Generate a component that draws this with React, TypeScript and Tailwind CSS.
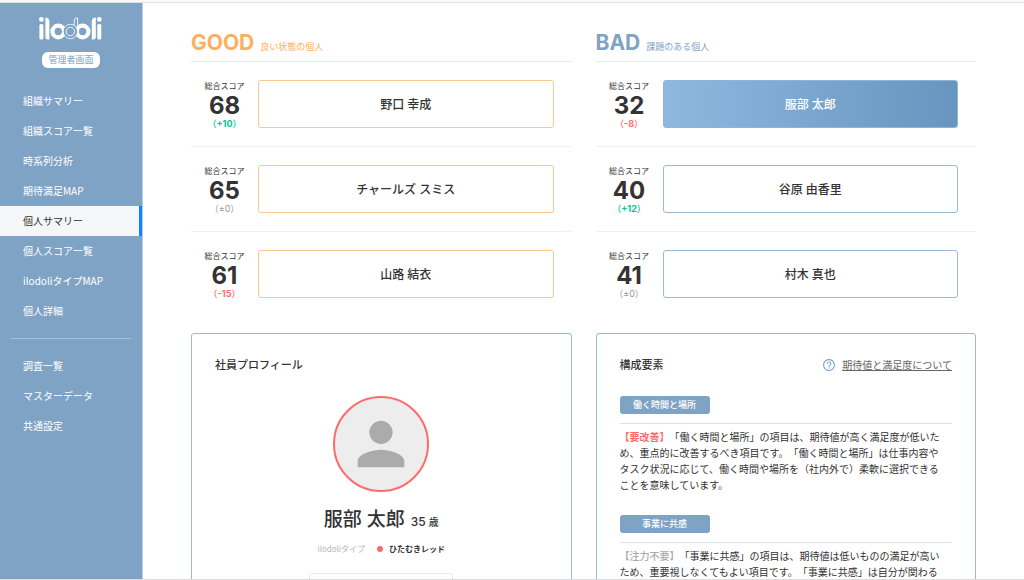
import React from 'react';

type Person = {
  name: string;
  score: number;
  diff: number;
  active?: boolean;
};

const mainMenu = [
  '組織サマリー',
  '組織スコア一覧',
  '時系列分析',
  '期待満足MAP',
  '個人サマリー',
  '個人スコア一覧',
  'ilodoliタイプMAP',
  '個人詳細',
];

const subMenu = ['調査一覧', 'マスターデータ', '共通設定'];

const goodList: Person[] = [
  { name: '野口 幸成', score: 68, diff: 10 },
  { name: 'チャールズ スミス', score: 65, diff: 0 },
  { name: '山路 結衣', score: 61, diff: -15 },
];

const badList: Person[] = [
  { name: '服部 太郎', score: 32, diff: -8, active: true },
  { name: '谷原 由香里', score: 40, diff: 12 },
  { name: '村木 真也', score: 41, diff: 0 },
];

const factors = [
  {
    title: '働く時間と場所',
    tag: '【要改善】',
    warn: true,
    text: '「働く時間と場所」の項目は、期待値が高く満足度が低いため、重点的に改善するべき項目です。「働く時間と場所」は仕事内容やタスク状況に応じて、働く時間や場所を（社内外で）柔軟に選択できることを意味しています。',
  },
  {
    title: '事業に共感',
    tag: '【注力不要】',
    warn: false,
    text: '「事業に共感」の項目は、期待値は低いものの満足が高いため、重要視しなくてもよい項目です。「事業に共感」は自分が関わる',
  },
];

function Logo() {
  return (
    <svg width="64" height="26" viewBox="0 0 64 26" fill="none" role="img" aria-label="ilodoli">
      <g fill="#fff">
        <circle cx="2.400" cy="3.400" r="2.400" />
        <rect x="0.400" y="8" width="4" height="15.500" rx="1.500" />
        <path d="M6.400 1.500c2.400 0 4 1.400 4 4v18h-1.500c-1.700 0-2.500-.8-2.500-2.500z" />
        <path d="M56.800 1.500c-2.400 0-4 1.400-4 4v18h1.500c1.700 0 2.500-.8 2.500-2.500z" />
        <circle cx="60.300" cy="3.400" r="2.400" />
        <rect x="58.300" y="8" width="4" height="15.500" rx="1.500" />
      </g>
      <circle cx="19.300" cy="15.500" r="5.800" stroke="#fff" strokeWidth="4.200" />
      <circle cx="43.600" cy="15.500" r="5.800" stroke="#fff" strokeWidth="4.200" />
      <circle cx="31.400" cy="15.500" r="5.700" stroke="#7fa3c5" strokeWidth="3" />
      <circle cx="31.400" cy="15.500" r="7.200" stroke="#fff" strokeWidth="0.800" />
      <circle cx="31.400" cy="15.500" r="4.200" stroke="#fff" strokeWidth="0.900" />
      <path d="M35.200 9.500V5.500c0-2.300 1.100-3.500 3.400-3.500v13.500" stroke="#fff" strokeWidth="0.900" />
    </svg>
  );
}

function MenuItem({ label }: { label: string }) {
  const active = label === '個人サマリー';
  return (
    <li>
      <a
        href="#"
        className={
          active
            ? 'block border-r-[3px] border-[#0a84ff] bg-[#f4f6f8] pl-[23px] text-[10px] leading-[30px] text-[#333]'
            : 'block pl-[23px] text-[10px] leading-[30px] text-white'
        }
      >
        {label}
      </a>
    </li>
  );
}

function Sidebar() {
  return (
    <aside className="w-[143px] shrink-0 border-r border-[#b9cde0] bg-[#7fa3c5] font-['Noto_Sans_CJK_JP',sans-serif]">
      <div className="flex h-[83px] flex-col items-center pt-[13px]">
        <Logo />
        <span className="mt-[10px] rounded-md bg-white px-[6px] text-[9px] leading-4 text-[#7fa3c5]">管理者画面</span>
      </div>
      <nav>
        <ul>
          {mainMenu.map((label) => (
            <MenuItem key={label} label={label} />
          ))}
        </ul>
        <hr className="mx-[11px] my-3 border-[#a5bfd8]" />
        <ul>
          {subMenu.map((label) => (
            <MenuItem key={label} label={label} />
          ))}
        </ul>
      </nav>
    </aside>
  );
}

function Diff({ value }: { value: number }) {
  if (value > 0) {
    return <p className="text-[9px] leading-[9px] font-medium text-[#00c896]">（<b>+{value}</b>）</p>;
  }
  if (value < 0) {
    return <p className="text-[9px] leading-[9px] font-medium text-[#ff6b6b]">（<b>{value}</b>）</p>;
  }
  return <p className="text-[9px] leading-[9px] text-[#999]">（±0）</p>;
}

function ScoreRow({ person, good }: { person: Person; good: boolean }) {
  let button = 'border-[#9db8d2] bg-white';
  if (good) button = 'border-[#fdc68c] bg-white';
  if (person.active) button = 'border-[#8fb4d8] bg-linear-to-r from-[#8fb8de] to-[#6795bf] bg-origin-border text-white';

  return (
    <li className={`flex border-b py-[18px] pr-[18px] last:border-b-0 ${good ? 'border-[#fdeee0]' : 'border-[#ecf1f6]'}`}>
      <div className="w-[67px] shrink-0 text-center whitespace-nowrap">
        <p className="text-[8px] leading-3">総合スコア</p>
        <p className="text-2xl leading-[27px] font-bold">{person.score}</p>
        <Diff value={person.diff} />
      </div>
      <button type="button" className={`h-12 flex-1 rounded-[3px] border pt-[2px] text-xs font-medium ${button}`}>
        {person.name}
      </button>
    </li>
  );
}

function Ranking({ title, note, list, good }: { title: string; note: string; list: Person[]; good: boolean }) {
  return (
    <section>
      <h2
        className={
          good
            ? 'flex items-baseline gap-[6px] border-b border-[#fde5cf] pb-1 text-[#ffae5e]'
            : 'flex items-baseline gap-[6px] border-b border-[#e3eaf1] pb-1 text-[#7fa3c5]'
        }
      >
        <span className="text-[21px] leading-7 font-bold">{title}</span>
        <span className="text-[9px] leading-3">{note}</span>
      </h2>
      <ul>
        {list.map((person) => (
          <ScoreRow key={person.name} person={person} good={good} />
        ))}
      </ul>
    </section>
  );
}

function Profile() {
  return (
    <section className="rounded-[3px] border border-[#9db8d2] px-[23px] pt-6">
      <h3 className="text-[11px] leading-[14px] font-medium">社員プロフィール</h3>
      <div className="mt-6 flex flex-col items-center">
        <div className="flex size-24 items-center justify-center rounded-full border-2 border-[#ff6b6b] bg-[#ededed]">
          <svg width="70" height="70" viewBox="0 0 24 24" fill="#ababab">
            <path d="M12 12c2.210 0 4-1.790 4-4s-1.790-4-4-4-4 1.790-4 4 1.790 4 4 4zm0 2c-2.670 0-8 1.340-8 4v2h16v-2c0-2.660-5.330-4-8-4z" />
          </svg>
        </div>
        <p className="mt-[14px] flex items-baseline gap-[6px] leading-7">
          <span className="text-[19px] font-medium">服部 太郎</span>
          <span className="text-xs font-medium">
            35 <span className="text-[10px]">歳</span>
          </span>
        </p>
        <p className="mt-[7px] flex items-center text-[8px] leading-4">
          <span className="font-['Noto_Sans_CJK_JP',sans-serif] text-[#b5b5b5]">ilodoliタイプ</span>
          <span className="mr-[6px] ml-3 size-[6px] rounded-full bg-[#ff6b6b]" />
          <span className="font-bold">ひたむきレッド</span>
        </p>
        <div className="mt-4 h-20 w-36 rounded-[3px] border border-[#e3ebf3]" />
      </div>
    </section>
  );
}

function Factors() {
  return (
    <section className="rounded-[3px] border border-[#9db8d2] px-[23px] pt-6">
      <div className="flex items-center justify-between leading-[14px]">
        <h3 className="text-[11px] font-medium">構成要素</h3>
        <a href="#" className="flex items-center gap-[7px] text-[10px] text-[#666]">
          <svg width="12" height="12" viewBox="2 2 20 20" fill="#7fa9d2">
            <path d="M11 18h2v-2h-2v2zm1-16C6.480 2 2 6.480 2 12s4.480 10 10 10 10-4.480 10-10S17.520 2 12 2zm0 18c-4.410 0-8-3.590-8-8s3.590-8 8-8 8 3.590 8 8-3.590 8-8 8zm0-14c-2.210 0-4 1.790-4 4h2c0-1.100.9-2 2-2s2 .9 2 2c0 2-3 1.750-3 5h2c0-2.250 3-2.500 3-5 0-2.210-1.790-4-4-4z" />
          </svg>
          <span className="underline">期待値と満足度について</span>
        </a>
      </div>
      <div className="mt-6 flex flex-col gap-[22px]">
        {factors.map((factor) => (
          <article key={factor.title}>
            <div className="border-b border-[#d6e2ee] pb-[9px]">
              <h4 className="w-[90px] rounded-[3px] bg-[#7fa3c5] text-center text-[9px] leading-[18px] font-medium text-white">
                {factor.title}
              </h4>
            </div>
            <p className="pt-[5px] pr-[10px] text-[10px] leading-4">
              <span className={factor.warn ? 'font-bold text-[#ff6b6b]' : 'font-medium text-[#aaa]'}>{factor.tag}</span>
              {factor.text}
            </p>
          </article>
        ))}
      </div>
    </section>
  );
}

export default function App() {
  return (
    <div className="flex h-screen flex-col overflow-hidden border-b border-[#dcdcdc] bg-white font-[Inter,'Noto_Sans_CJK_JP',sans-serif] text-[#333] [text-spacing-trim:space-all]">
      <div className="h-[3px] shrink-0 border-b border-[#e2e2e2] bg-[#f8f8f8]" />
      <div className="flex min-h-0 flex-1">
        <Sidebar />
        <main className="min-w-0 flex-1 overflow-hidden px-12 pt-[26px]">
          <div className="grid grid-cols-2 gap-x-6">
            <Ranking title="GOOD" note="良い状態の個人" list={goodList} good />
            <Ranking title="BAD" note="課題のある個人" list={badList} good={false} />
          </div>
          <div className="mt-[17px] grid grid-cols-2 gap-x-6">
            <Profile />
            <Factors />
          </div>
        </main>
      </div>
    </div>
  );
}
